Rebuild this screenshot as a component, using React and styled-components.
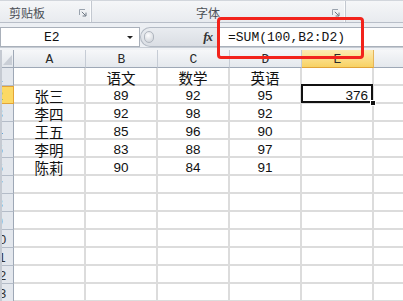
import React from 'react';
import styled, { createGlobalStyle } from 'styled-components';

const GlobalStyle = createGlobalStyle`
  html, body { margin: 0; padding: 0; background: #fff; }
  body {
    font-family: "Liberation Sans", "Noto Sans CJK SC", sans-serif;
    overflow: hidden;
  }
  * { box-sizing: border-box; }
`;

const Screen = styled.div`
  position: relative;
  width: 403px;
  height: 301px;
  overflow: hidden;
  display: flex;
  flex-direction: column;
  background: #fff;
`;

const Ribbon = styled.div`
  height: 23px;
  flex: none;
  display: flex;
  background: linear-gradient(#f5f6f8, #e8ebef);
  border-top: 1px solid #d2d6dc;
  border-bottom: 1px solid #b8bec8;
`;

const Group = styled.div`
  width: ${p => p.$w ? `${p.$w}px` : 'auto'};
  flex: ${p => p.$w ? 'none' : '1'};
  display: flex;
  align-items: center;
  padding: 2px ${p => p.$pr || 0}px 0 ${p => p.$pl || 0}px;
  border-right: ${p => p.$w ? '1px solid #c3c8d0' : 'none'};
  box-shadow: ${p => p.$w ? 'inset -1px 0 0 #fbfcfd' : 'none'};
`;

const GroupLabel = styled.span`
  font-family: "Noto Sans CJK SC", sans-serif;
  font-size: 12px;
  line-height: 1;
  color: #4b4f56;
`;

const Launcher = styled.svg`
  margin-left: auto;
  flex: none;
`;

const Strip = styled.div`
  height: 4px;
  flex: none;
  background: #eceff3;
`;

const FormulaBar = styled.div`
  height: 20px;
  flex: none;
  display: flex;
  background: #eceff3;
`;

const NameBox = styled.div`
  width: 140px;
  display: flex;
  align-items: center;
  padding-left: 43px;
  padding-right: 6px;
  background: #fff;
  border: 1px solid #a9b0ba;
  font-family: "Liberation Mono", monospace;
  font-size: 13px;
  color: #111;
`;

const DropArrow = styled.span`
  margin-left: auto;
  width: 0;
  height: 0;
  border-left: 3px solid transparent;
  border-right: 3px solid transparent;
  border-top: 3px solid #222;
`;

const Splitter = styled.div`
  width: 77px;
  display: flex;
  align-items: center;
  padding: 0 5px 0 3px;
  background: linear-gradient(#e9ecf0, #dadee4);
  border: 1px solid #b3bac4;
  border-right: none;
  border-radius: 10px 0 0 10px;
`;

const Knob = styled.span`
  width: 10px;
  height: 12px;
  border-radius: 6px;
  background: radial-gradient(circle at 40% 35%, #fdfdfe, #c7ccd3);
  border: 1px solid #b0b6bf;
`;

const Fx = styled.span`
  margin-left: auto;
  font-family: "Liberation Serif", serif;
  font-style: italic;
  font-weight: bold;
  font-size: 13px;
  color: #333;
  letter-spacing: -1px;
`;

const FormulaInput = styled.div`
  flex: 1;
  display: flex;
  align-items: center;
  padding-left: 10px;
  background: #fff;
  border: 1px solid #a9b0ba;
  border-right: none;
  font-family: "Liberation Mono", monospace;
  font-size: 13px;
  color: #111;
`;

const Gap = styled.div`
  height: 3px;
  flex: none;
  background: #f1f3f6;
  border-top: 1px solid #c6ccd4;
`;

const Sheet = styled.div`
  display: grid;
  grid-template-columns: 12px repeat(6, 72px);
  grid-auto-rows: 18px;
  border-left: 2px solid #c5cad2;
`;

const Corner = styled.div`
  display: flex;
  align-items: flex-end;
  justify-content: flex-end;
  padding: 0 1px 2px 0;
  background: linear-gradient(#f4f6f8, #e3e7ec);
  border-right: 1px solid #9ea8b6;
  border-bottom: 1px solid #9ea8b6;
`;

const ColHead = styled.div`
  display: flex;
  align-items: center;
  justify-content: center;
  padding-top: 2px;
  font-family: "Liberation Mono", monospace;
  font-size: 13px;
  color: #2a2a2a;
  background: ${p => p.$active
    ? 'linear-gradient(#fdebb2, #f8d263)'
    : 'linear-gradient(#f6f7f9, #e4e8ed)'};
  border-right: 1px solid ${p => p.$active ? '#e6b559' : '#c6ccd5'};
  border-bottom: 1px solid ${p => p.$active ? '#e0a338' : '#9ea8b6'};
`;

/* the row-number column is scrolled: only the right edge of the numbers shows */
const RowHead = styled.div`
  overflow: hidden;
  display: flex;
  align-items: center;
  padding-top: 2px;
  background: ${p => p.$active ? '#fcd965' : '#e3e7ed'};
  border-right: 1px solid ${p => p.$active ? '#e3a437' : '#9ea8b6'};
  border-bottom: 1px solid ${p => p.$active ? '#e3a437' : '#b4bcc8'};
  box-shadow: ${p => p.$active ? 'inset 0 1px 0 #e3a437' : 'none'};
`;

const RowNum = styled.span`
  flex: none;
  width: 28px;
  margin-left: -17px;
  text-align: center;
  font-size: 13px;
  color: #333;
`;

const Cell = styled.div`
  position: relative;
  display: flex;
  align-items: center;
  justify-content: ${p => p.$right ? 'flex-end' : 'center'};
  padding: 3px ${p => p.$right ? 4 : 0}px 0 0;
  font-family: "Liberation Sans", "Noto Sans CJK SC", sans-serif;
  font-size: ${p => p.$num ? '13.5px' : '14.5px'};
  color: #111;
  border-right: 2px solid #dcdcdc;
  border-bottom: 2px solid #dcdcdc;
`;

const SelBox = styled.span`
  position: absolute;
  left: -1px;
  top: -2px;
  right: -1px;
  bottom: -1px;
  border: 2px solid #111;
  z-index: 2;
`;

const FillHandle = styled.span`
  position: absolute;
  right: -4px;
  bottom: -4px;
  width: 6px;
  height: 6px;
  background: #111;
  border: 1px solid #fff;
  z-index: 3;
`;

const Callout = styled.div`
  position: absolute;
  left: 217px;
  top: 17px;
  width: 147px;
  height: 42px;
  border: 3px solid #f2231c;
  border-radius: 4px;
  z-index: 5;
`;

const cols = ['A', 'B', 'C', 'D', 'E', 'F'];

const data = [
  ['', '语文', '数学', '英语', '', ''],
  ['张三', '89', '92', '95', '376', ''],
  ['李四', '92', '98', '92', '', ''],
  ['王五', '85', '96', '90', '', ''],
  ['李明', '83', '88', '97', '', ''],
  ['陈莉', '90', '84', '91', '', ''],
];

const isNum = v => /^\d+$/.test(v);

const LauncherIcon = () => (
  <Launcher width="8" height="8" viewBox="0 0 8 8">
    <path d="M0.5 6V0.5H6" stroke="#9aa3ae" fill="none" />
    <path d="M2.8 2.8L6.8 6.8M7 3.6V7H3.6" stroke="#6f7884" fill="none" />
  </Launcher>
);

export default function App() {
  const rows = Array.from({ length: 13 }, (_, i) => data[i] || ['', '', '', '', '', '']);
  return (
    <Screen>
      <GlobalStyle />
      <Ribbon>
        <Group $w={92} $pl={9} $pr={4}>
          <GroupLabel>剪贴板</GroupLabel>
          <LauncherIcon />
        </Group>
        <Group $w={254} $pl={104} $pr={5}>
          <GroupLabel>字体</GroupLabel>
          <LauncherIcon />
        </Group>
        <Group />
      </Ribbon>
      <Strip />
      <FormulaBar>
        <NameBox>
          E2
          <DropArrow />
        </NameBox>
        <Splitter>
          <Knob />
          <Fx>fx</Fx>
        </Splitter>
        <FormulaInput>=SUM(100,B2:D2)</FormulaInput>
      </FormulaBar>
      <Gap />
      <Sheet>
        <Corner>
          <svg width="9" height="10" viewBox="0 0 9 10">
            <path d="M9 0V10H0Z" fill="#c9ced6" />
          </svg>
        </Corner>
        {cols.map(c => (
          <ColHead key={c} $active={c === 'E'}>{c}</ColHead>
        ))}
        {rows.map((r, i) => (
          <React.Fragment key={i}>
            <RowHead $active={i === 1}>
              <RowNum>{i + 1}</RowNum>
            </RowHead>
            {r.map((v, j) => {
              const sel = i === 1 && j === 4;
              return (
                <Cell key={j} $num={isNum(v)} $right={sel}>
                  {v}
                  {sel && <SelBox />}
                  {sel && <FillHandle />}
                </Cell>
              );
            })}
          </React.Fragment>
        ))}
      </Sheet>
      <Callout />
    </Screen>
  );
}
